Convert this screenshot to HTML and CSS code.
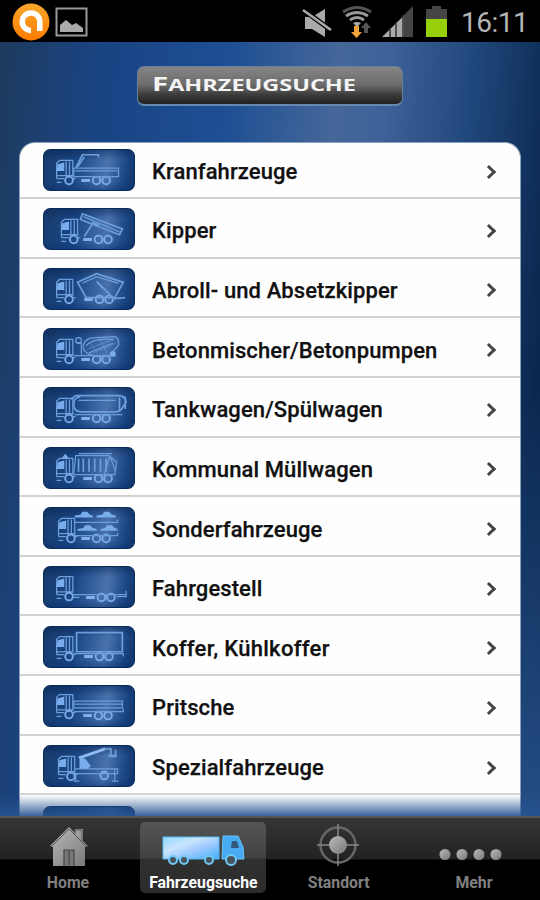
FILE: index.html
```
<!DOCTYPE html>
<html lang="de">
<head>
<meta charset="utf-8">
<title>Fahrzeugsuche</title>
<link rel="stylesheet" href="styles.css">
</head>
<body>
<svg class="defs" width="0" height="0">
  <defs>
    <g id="cab"><path d="M12 30V14l3-3h14v17M22 12v16M25.500 12v16M12 27h18M12 30h8M12 34h5M29 30h3"/><path class="solid" d="M13 15l7-2v9h-8z"/><circle class="wheel" cx="25" cy="32" r="4"/></g>
    <g id="wheels"><circle class="wheel" cx="54" cy="32" r="4"/><circle class="wheel" cx="64" cy="32" r="4"/><path class="thick" d="M38 32h9"/></g>
  </defs>
</svg>
<div class="phone">
  <header class="status">
    <svg width="90" height="42" viewBox="0 0 90 42">
      <defs><linearGradient id="or" x2="0" y2="1"><stop stop-color="#f9a62c"/><stop offset="1" stop-color="#ff7c00"/></linearGradient></defs>
      <circle cx="31" cy="22" r="18.500" fill="url(#or)"/>
      <path d="M31 30.500A8.800 8.800 0 1 1 39.800 22v9" fill="none" stroke="#fff" stroke-width="5.500"/>
      <rect x="56.500" y="8.500" width="30" height="27" fill="none" stroke="#999" stroke-width="2"/>
      <path d="M60 32v-7l6-5 6 5 4-2 7 5v4z" fill="#aaa"/>
    </svg>
    <div class="status-right">
      <svg width="150" height="42" viewBox="300 0 150 42">
        <path d="M305 17h7l13-8v28l-13-8h-7z" fill="#aaa"/>
        <path d="M305 11l27 20" stroke="#000" stroke-width="5"/><path d="M303 10l28 20" stroke="#aaa" stroke-width="2.700"/>
        <g fill="none" stroke-width="2.800"><path d="M343 12q14-9 28 0" stroke="#555"/><path d="M346 16q11-7 22 0M350 20q7-5 14 0" stroke="#999"/></g>
        <path d="M353 23q4-2 8 0l-4 4z" fill="#aaa"/>
        <path d="M354 26h5v6h3l-5.500 6-5.500-6h3z" fill="#f3a33b"/>
        <path d="M366 22l5 6h-3v5h-4v-5h-3z" fill="#555"/>
        <path d="M382 37l22-21.500V37z" fill="#aaa"/><path d="M404 15l9-9v31h-9z" fill="#444"/>
        <path d="M390 28v9M396 22v15M403 15v22" stroke="#333" stroke-width="1.500"/>
        <path d="M426 19V9h6V6h9v3h6v10z" fill="#454545"/><rect x="426" y="19" width="21" height="18" fill="#97cf0b"/>
      </svg>
      <span class="clock">16:11</span>
    </div>
  </header>
  <main>
    <h1 class="title"><svg width="264" height="37" viewBox="0 0 264 37"><text y="24" x="14" textLength="204" lengthAdjust="spacingAndGlyphs" class="title-text"><tspan class="cap">F</tspan>AHRZEUGSUCHE</text></svg></h1>
    <ul class="list">
      <li><svg class="tile" viewBox="0 0 92 42"><use href="#cab"/><use href="#wheels"/><path d="M30 19h47v9H30zM31 22h45"/><path class="mid" d="M32 19L39 5h17v3M41 7l-7 11"/></svg><span>Kranfahrzeuge</span><i></i></li>
      <li><svg class="tile" viewBox="0 0 92 42"><use href="#cab" x="5"/><use href="#wheels" x="2"/><path class="mid" d="M39 5l42 16-3 6-41-16zM50 15l-9 14M57 17l-8-3"/><path d="M40 8l38 16"/></svg><span>Kipper</span><i></i></li>
      <li><svg class="tile" viewBox="0 0 92 42"><use href="#cab"/><use href="#wheels" x="3"/><path class="mid" d="M34 14l20-9 28 9-9 16H43z"/><path d="M39 15l15-7 23 7"/><path class="mid" d="M54 13l18 18 12-1M60 20l-6-7"/></svg><span>Abroll- und Absetzkipper</span><i></i></li>
      <li><svg class="tile" viewBox="0 0 92 42"><use href="#cab"/><use href="#wheels"/><path d="M40 19c0-8 6-10 14-10l19-1q5 2 4 9l-10 11c-14 2-27-1-27-9zM43 18c5-7 17-8 29-7M46 25l25-10M32 14l6 1v12M30 28h44"/><path class="faint" d="M44 21l28-10M49 26l25-11M47 14l8 12M57 10l8 15"/><circle cx="35" cy="12" r="3"/><circle class="solid" cx="71" cy="26" r="3"/></svg><span>Betonmischer/Betonpumpen</span><i></i></li>
      <li><svg class="tile" viewBox="0 0 92 42"><use href="#cab"/><use href="#wheels"/><path class="mid" d="M27 12l5-4h45q7 0 8 7l-4 6q-2 4-8 4H38q-8 0-8-8 0-7 7-8M78 10v13M84 9v13"/><path d="M31 28h50M35 13h39"/></svg><span>Tankwagen/Spülwagen</span><i></i></li>
      <li><svg class="tile" viewBox="0 0 92 42"><use href="#cab"/><use href="#wheels" x="2"/><path d="M32 8h35l8 7-2 13H30zM35 6h35M68 8l-6 20M68 8l6 17"/><path class="mid" d="M35 11v14M40 11v14M46 11v14M52 11v14M58 11v14M64 11v14"/><path class="solid" d="M17 11l4-5 4 5z"/></svg><span>Kommunal Müllwagen</span><i></i></li>
      <li><svg class="tile" viewBox="0 0 92 42"><use href="#cab" x="2"/><use href="#wheels"/><path d="M30 15h46v-3M30 29h46v-3"/><path class="solid" d="M31 8l6-1 2-3h5l3 3 3 1v2H31zM54 8l6-1 2-3h5l3 3 4 1v2H54zM34 22l6-1 2-3h5l3 3 4 1v2H34zM58 22l5-1 2-3h5l3 3 3 1v2H58z"/></svg><span>Sonderfahrzeuge</span><i></i></li>
      <li><svg class="tile" viewBox="0 0 92 42"><use href="#cab" y="-1"/><use href="#wheels" x="5"/><path d="M30 29h55v-4M29 32h7M75 31h10v-3"/></svg><span>Fahrgestell</span><i></i></li>
      <li><svg class="tile" viewBox="0 0 92 42"><use href="#cab" y="-1"/><use href="#wheels" x="3" y="-1"/><path class="mid" d="M33 6h48v20H33z"/><path d="M30 28h52v3"/></svg><span class="wide">Koffer, Kühlkoffer</span><i></i></li>
      <li><svg class="tile" viewBox="0 0 92 42"><use href="#cab" y="-2"/><use href="#wheels" x="2" y="-1"/><path d="M30 16h51v7H30zM31 19h50M30 27h52v-3"/></svg><span>Pritsche</span><i></i></li>
      <li><svg class="tile" viewBox="0 0 92 42"><use href="#cab" x="2"/><circle class="wheel" cx="62" cy="31" r="4"/><path d="M31 24h45v5H31M32 30v7M30 37h6M73 24v13M70 37h7"/><path class="boom" d="M41 17l-4-5 26-9"/><path class="mid" d="M62 3h7v8h5V4M66 10h8"/><path class="solid" d="M36 13h6l6 8-3 3H36z"/></svg><span>Spezialfahrzeuge</span><i></i></li>
      <li><svg class="tile" viewBox="0 0 92 42"></svg></li>
    </ul>
    <div class="fade"></div>
  </main>
  <nav>
    <a><svg width="126" height="52" viewBox="0 0 126 52">
      <defs><linearGradient id="gr" x2="1" y2="1"><stop stop-color="#bbb"/><stop offset="1" stop-color="#777"/></linearGradient><linearGradient id="bl" y2="1"><stop stop-color="#8ed9ff"/><stop offset=".35" stop-color="#c9e4fc"/><stop offset=".6" stop-color="#9dcaff"/><stop offset="1" stop-color="#42aefa"/></linearGradient></defs>
      <path d="M45 24L64 5l6 6V7h8v12l5 5-3 1v19H48V25z" fill="url(#gr)"/><path d="M46 25l18-18 18 18M70 12V8h7v11" fill="none" stroke="#555"/><path d="M59 44V28h10v16M64 29v14" fill="#777" stroke="#444" stroke-width="1.200"/></svg>Home</a>
    <a class="active"><svg width="126" height="52" viewBox="0 0 126 52"><path d="M23 15h56v22H23z" fill="url(#bl)" stroke="#58bbf4"/><path d="M83 14h15l5 11 1 12H82z" fill="#48aaf1" stroke="#64c4fa"/><path d="M92 19h5l2 7h-8z" fill="#315779"/><g fill="#46535c" stroke="#70c8f6" stroke-width="2"><circle cx="33" cy="38" r="4"/><circle cx="44" cy="38" r="4"/><circle cx="69" cy="38" r="4"/><circle cx="91" cy="38" r="5"/></g></svg>Fahrzeugsuche</a>
    <a><svg width="126" height="52" viewBox="0 0 126 52"><circle cx="62" cy="23" r="17.500" fill="none" stroke="#666" stroke-width="2.500"/><path d="M62 2v42M41 23h42" stroke="#888" stroke-width="1.500"/><circle cx="62" cy="23" r="9" fill="url(#gr)"/></svg>Standort</a>
    <a><svg width="126" height="52" viewBox="0 0 126 52"><g fill="url(#gr)"><circle cx="34" cy="32.500" r="5.500"/><circle cx="51" cy="32.500" r="5.500"/><circle cx="68" cy="32.500" r="5.500"/><circle cx="85" cy="32.500" r="5.500"/></g></svg>Mehr</a>
  </nav>
</div>
</body>
</html>
```
FILE: styles.css
```
* { box-sizing: border-box; }
body { margin: 0; background: #000; font-family: Roboto, "Liberation Sans", sans-serif; }
.defs { display: block; height: 0; }
.phone { width: 540px; height: 900px; display: flex; flex-direction: column; overflow: hidden; }
.status { height: 42px; flex: none; display: flex; justify-content: space-between; background: #000; }
.status-right { display: flex; width: 240px; }
.clock { color: #b5b5b5; font-size: 28px; line-height: 45px; margin-left: 11px; letter-spacing: -.5px; white-space: nowrap; }
main {
  position: relative; flex: none; height: 774px; overflow: hidden;
  display: flex; flex-direction: column; align-items: center;
  background:
    linear-gradient(to bottom, transparent 45%, rgba(40, 82, 140, .9)) 520px 0 / 20px 100% no-repeat,
    linear-gradient(95deg, #1c3a5c 0, #1c4176 10%, #194484 18%, #1e4f93 38%, #456799 56%, #3e6299 64%, #1f467a 79%, #0a284f 93%, #08254c);
}
.title {
  width: 266px; height: 40px; margin: 24px 0 0; flex: none; border-radius: 7px;
  background: linear-gradient(#858585, #6c6c6c 48%, #3c3c3c 75%, #202020);
  border: 1px solid #64809f; border-bottom: 2px solid #6788b0;
}
.title svg { display: block; }
.title-text { font-family: "Open Sans", sans-serif; font-weight: 700; font-size: 15.5px; fill: #f4f4f4; }
.cap { font-size: 19.5px; }
.list {
  width: 502px; margin: 36px 0 0; padding: 0; list-style: none; flex: none;
  background: #fefefe; border: 1px solid #8ba0ba; border-bottom: 0; border-radius: 16px 16px 0 0; overflow: hidden;
}
.list li { height: 59.65px; display: flex; align-items: center; padding: 3px 22px 0 23px; border-bottom: 2px solid #d2d2d2; }
.list li:first-child { height: 56px; padding-top: 0; }
.list li:last-child { border: 0; }
.tile {
  width: 92px; height: 42px; flex: none; margin-right: 17px; border-radius: 7px; border: 1px solid #092b59;
  background: linear-gradient(rgba(7, 35, 80, .5), transparent 25%, transparent 80%, rgba(7, 45, 110, .45)), linear-gradient(100deg, #173b6b, #1b4785 35%, #4a73ae 68%, #1b4684 88%, #103466);
  fill: none; stroke: #6d9edc; stroke-width: 1.3;
}
.solid { fill: #79aced; stroke: none; }
.wheel { stroke: #7cabea; stroke-width: 2; }
.thick { stroke: #80b0ed; stroke-width: 3; }
.mid { stroke-width: 1.8; }
.boom { stroke: #8dbaf0; stroke-width: 3; }
.faint { stroke-width: .6; }
.list span { flex: 1; font-size: 22px; font-weight: 500; line-height: 28px; color: #111; padding-top: 4px; letter-spacing: .1px; white-space: nowrap; -webkit-text-stroke: .25px #111; }
.list .wide { letter-spacing: .3px; }
.list i { width: 10px; height: 10px; margin-top: 3px; margin-right: 2px; border: solid #444; border-width: 3px 3px 0 0; transform: translateX(-2px) rotate(45deg); }
.fade { position: absolute; left: 0; right: 0; bottom: 0; height: 21px; background: linear-gradient(rgba(38, 83, 145, 0), rgba(38, 83, 145, .9)); }
nav { flex: 1; display: flex; justify-content: space-between; padding: 4px 3px 7px 5px; border-top: 2px solid #555; background: linear-gradient(#363636, #222 41px, #000 42px, #000); }
nav a { width: 126px; display: flex; flex-direction: column; align-items: center; font-size: 15.8px; font-weight: 700; line-height: 18px; color: #808080; border-radius: 5px; white-space: nowrap; }
nav svg { flex: none; }
nav .active { color: #fff; background: linear-gradient(#555, #414141 36px, #303030 37px, #2c2c2c); }
```
